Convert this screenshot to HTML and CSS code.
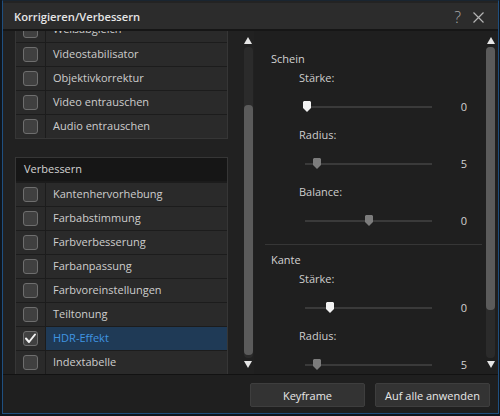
FILE: index.html
```html
<!DOCTYPE html>
<html lang="de">
<head>
<meta charset="utf-8">
<title>Korrigieren/Verbessern</title>
<link rel="stylesheet" href="styles.css">
</head>
<body>
<div class="window">
  <div class="titlebar">
    <span class="title">Korrigieren/Verbessern</span>
    <span class="tb-icons">
      <span class="help">?</span>
      <svg class="close" width="11" height="11" viewBox="0 0 11 11"><path d="M0.5 0.5 L10.5 10.5 M10.5 0.5 L0.5 10.5" stroke="#b4b4b4" stroke-width="1.2" fill="none"/></svg>
    </span>
  </div>
  <div class="main">
    <div class="left">
      <div class="listwrap">
        <div class="list">
          <div class="section">
            <div class="row"><span class="cb"><span class="box"></span></span><span class="label">Weißabgleich</span></div>
            <div class="row"><span class="cb"><span class="box"></span></span><span class="label">Videostabilisator</span></div>
            <div class="row"><span class="cb"><span class="box"></span></span><span class="label">Objektivkorrektur</span></div>
            <div class="row"><span class="cb"><span class="box"></span></span><span class="label">Video entrauschen</span></div>
            <div class="row"><span class="cb"><span class="box"></span></span><span class="label">Audio entrauschen</span></div>
          </div>
          <div class="section second">
            <div class="header">Verbessern</div>
            <div class="row"><span class="cb"><span class="box"></span></span><span class="label">Kantenhervorhebung</span></div>
            <div class="row"><span class="cb"><span class="box"></span></span><span class="label">Farbabstimmung</span></div>
            <div class="row"><span class="cb"><span class="box"></span></span><span class="label">Farbverbesserung</span></div>
            <div class="row"><span class="cb"><span class="box"></span></span><span class="label">Farbanpassung</span></div>
            <div class="row"><span class="cb"><span class="box"></span></span><span class="label">Farbvoreinstellungen</span></div>
            <div class="row"><span class="cb"><span class="box"></span></span><span class="label">Teiltonung</span></div>
            <div class="row selected"><span class="cb"><span class="box checked"><svg width="13" height="13" viewBox="0 0 13 13"><path d="M2 6.5 L5 10 L11 2.5" stroke="#f2f2f2" stroke-width="2" fill="none" stroke-linecap="round" stroke-linejoin="round"/></svg></span></span><span class="label">HDR-Effekt</span></div>
            <div class="row"><span class="cb"><span class="box"></span></span><span class="label">Indextabelle</span></div>
          </div>
        </div>
      </div>
      <div class="scrollbar sb-left">
        <span class="arrow up"></span>
        <div class="track"><div class="thumb thumb-left"></div></div>
        <span class="arrow down"></span>
      </div>
    </div>
    <div class="right">
      <div class="groups">
        <div class="group">
          <div class="gtitle">Schein</div>
          <div class="plabel">Stärke:</div>
          <div class="slider"><div class="track-line"><svg class="knob active" style="left:-2px" width="8" height="11" viewBox="0 0 8 11"><polygon points="0,1 1,0 7,0 8,1 8,7 4,11 0,7"/></svg></div><span class="val">0</span></div>
          <div class="plabel">Radius:</div>
          <div class="slider"><div class="track-line"><svg class="knob" style="left:8px" width="8" height="11" viewBox="0 0 8 11"><polygon points="0,1 1,0 7,0 8,1 8,7 4,11 0,7"/></svg></div><span class="val">5</span></div>
          <div class="plabel">Balance:</div>
          <div class="slider"><div class="track-line"><svg class="knob" style="left:60px" width="8" height="11" viewBox="0 0 8 11"><polygon points="0,1 1,0 7,0 8,1 8,7 4,11 0,7"/></svg></div><span class="val">0</span></div>
        </div>
        <div class="group second">
          <div class="gtitle">Kante</div>
          <div class="plabel">Stärke:</div>
          <div class="slider"><div class="track-line"><svg class="knob active" style="left:21px" width="8" height="11" viewBox="0 0 8 11"><polygon points="0,1 1,0 7,0 8,1 8,7 4,11 0,7"/></svg></div><span class="val">0</span></div>
          <div class="plabel">Radius:</div>
          <div class="slider"><div class="track-line"><svg class="knob" style="left:8px" width="8" height="11" viewBox="0 0 8 11"><polygon points="0,1 1,0 7,0 8,1 8,7 4,11 0,7"/></svg></div><span class="val">5</span></div>
        </div>
      </div>
      <div class="scrollbar sb-right">
        <span class="arrow up"></span>
        <div class="track"><div class="thumb thumb-right"></div></div>
        <span class="arrow down"></span>
      </div>
    </div>
  </div>
  <div class="footer">
    <button class="btn">Keyframe</button>
    <button class="btn">Auf alle anwenden</button>
  </div>
</div>
</body>
</html>
```
FILE: styles.css
```css
* { box-sizing: border-box; }
html, body { margin: 0; padding: 0; }
body {
  background: #0f151c;
  width: 500px;
  height: 416px;
  overflow: hidden;
  font-family: "Open Sans", "Noto Sans", "DejaVu Sans", sans-serif;
  font-size: 11px;
  color: #cdcdcd;
}
.window {
  margin-left: 2px;
  width: 497px;
  height: 414px;
  border: 1px solid #1f4f7f;
  border-top-color: #1a2530;
  background: #1f1f1f;
  display: flex;
  flex-direction: column;
}
.titlebar {
  height: 30px;
  flex: none;
  background: #2c2c2c;
  border-top: 2px solid #232323;
  border-bottom: 2px solid #161616;
  display: flex;
  align-items: center;
  padding: 1px 14px 0 11px;
}
.title {
  font-size: 11.2px;
  font-weight: 600;
  color: #e6e6e6;
  flex: 1;
}
.tb-icons { display: flex; align-items: center; gap: 12px; }
.help { font-size: 16px; color: #a8a8a8; font-weight: 300; line-height: 1; }
.close { display: block; margin-top: 1px; }

.main {
  height: 343px;
  flex: none;
  display: flex;
}
.left {
  width: 251px;
  flex: none;
  display: flex;
  padding-left: 12px;
  background: #212121;
}
.listwrap {
  width: 213px;
  flex: none;
  overflow: hidden;
}
.list { margin-top: -14px; }
.section {
  border: 1px solid #363636;
  background: #2a2a2a;
}
.section.second { margin-top: 18px; }
.header {
  height: 24px;
  background: #161616;
  color: #d2d2d2;
  padding-left: 8px;
  line-height: 21px;
  border-bottom: 1px solid #1b1b1b;
}
.row {
  height: 24px;
  display: flex;
  border-top: 1px solid #1c1c1c;
}
.section > .row:first-child { border-top: none; }
.cb {
  width: 30px;
  flex: none;
  border-right: 1px solid #1c1c1c;
  display: flex;
  align-items: center;
  justify-content: center;
}
.box {
  width: 15px;
  height: 15px;
  border: 1.5px solid #6e6e6e;
  border-radius: 3px;
  background: #404040;
  display: flex;
  align-items: center;
  justify-content: center;
}
.box svg { display: block; }
.label {
  flex: 1;
  padding-left: 7px;
  line-height: 21px;
  color: #cdcdcd;
  white-space: nowrap;
}
.row.selected .label {
  background: #1f3a56;
  color: #3f95e2;
}

.scrollbar {
  flex: none;
  display: flex;
  flex-direction: column;
  align-items: center;
  padding: 6px 0 6px;
  gap: 3px;
}
.sb-left { width: 10px; margin-left: 15px; }
.sb-right { width: 9px; margin-left: 4px; }
.arrow {
  width: 0; height: 0;
  border-left: 4px solid transparent;
  border-right: 4px solid transparent;
  flex: none;
}
.arrow.up { border-bottom: 7px solid #e6e6e6; }
.arrow.down { border-top: 7px solid #e6e6e6; }
.track {
  flex: 1;
  width: 9px;
  background: #2b2b2b;
  border-radius: 4px;
  display: flex;
  flex-direction: column;
}
.thumb {
  background: #5b5b5b;
  border-radius: 4px;
}
.thumb-left { margin-top: 58px; height: 250px; }
.thumb-right { height: 263px; }

.right {
  flex: 1;
  display: flex;
  background: #1f1f1f;
  padding-left: 11px;
  overflow: hidden;
}
.groups {
  width: 217px;
  flex: none;
  padding-top: 19px;
}
.group.second {
  margin-top: 5px;
  border-top: 1px solid #363636;
  padding-top: 6px;
}
.gtitle {
  height: 18px;
  line-height: 18px;
  padding-left: 6px;
  color: #d2d2d2;
}
.plabel {
  height: 20px;
  line-height: 20px;
  padding-left: 34px;
  color: #cdcdcd;
}
.slider {
  height: 37px;
  display: flex;
  align-items: center;
  padding-left: 40px;
}
.track-line {
  width: 127px;
  height: 2px;
  background: #3a3a3a;
  position: relative;
}
.knob {
  position: absolute;
  top: -5px;
  display: block;
  fill: #7c7c7c;
}
.knob.active { fill: #f2f2f2; }
.val {
  width: 35px;
  text-align: right;
  color: #d2d2d2;
}

.footer {
  flex: 1;
  border-top: 1px solid #121212;
  background: #1f1f1f;
  display: flex;
  justify-content: flex-end;
  gap: 10px;
  padding: 8px 8px 0 0;
}
.btn {
  width: 115px;
  height: 24px;
  background: #333333;
  border: 1px solid #3e3e3e;
  border-radius: 2px;
  color: #e8e8e8;
  font-family: "Open Sans", "Noto Sans", "DejaVu Sans", sans-serif;
  font-size: 11px;
  padding: 0;
}
```
